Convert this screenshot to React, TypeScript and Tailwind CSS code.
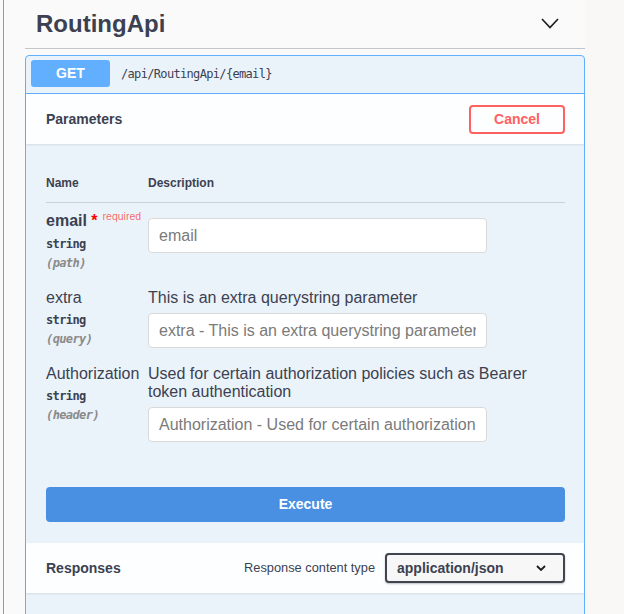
import React from "react";

const mono = "font-['DejaVu_Sans_Mono','Liberation_Mono',monospace]";

function ParamRow({
  name,
  required,
  type,
  inLoc,
  description,
  placeholder,
}: {
  name: string;
  required?: boolean;
  type: string;
  inLoc: string;
  description?: string;
  placeholder: string;
}) {
  return (
    <div className="flex py-[8px]">
      <div className="w-[102px] shrink-0">
        <div
          className={
            "text-[16px] leading-[20px] text-[#3b4151] whitespace-nowrap " +
            (required ? "font-bold" : "font-normal")
          }
        >
          {name}
          {required && (
            <>
              <span className="text-[#ff0000]">&nbsp;*</span>
              <span className="relative -top-[6px] px-[5px] text-[10.5px] font-normal text-[rgba(255,0,0,0.6)]">
                required
              </span>
            </>
          )}
        </div>
        <div className={mono + " mt-[3px] text-[12px] tracking-[-0.6px] leading-[18px] font-bold text-[#3b4151]"}>
          {type}
        </div>
        <div className={mono + " mt-[1px] text-[12px] tracking-[-0.6px] leading-[18px] font-bold italic text-[#8a8a8a]"}>
          ({inLoc})
        </div>
      </div>
      <div className="flex-1 pt-[1px]">
        {description && (
          <div className="text-[16px] leading-[18px] text-[#3b4151]">{description}</div>
        )}
        <input
          readOnly
          placeholder={placeholder}
          className="mt-[6px] block w-[339px] h-[35px] rounded-[4px] border border-[#d9d9d9] bg-white px-[10px] text-[16px] text-[#3b4151] placeholder:text-[#7a7a7a] outline-none font-['Liberation_Sans',Arial,sans-serif]"
        />
      </div>
    </div>
  );
}

export default function App() {
  return (
    <div className="min-h-screen w-full bg-[#fafafa] flex font-['Liberation_Sans',Arial,sans-serif] overflow-hidden">
      <div className="ml-[3px] border-l border-[#89bf04] pl-[21px] w-[582px] shrink-0">
        {/* Header */}
        <div className="h-[49px] border-b border-[#c3c5c9] flex items-center justify-between pl-[11px] pr-[26px]">
          <div className="text-[24px] leading-none font-bold text-[#3b4151]">RoutingApi</div>
          <svg width="18" height="11" viewBox="0 0 18 11" className="-mt-[2px]">
            <path d="M1 1 L9 9.5 L17 1" fill="none" stroke="#1b1b1b" strokeWidth="1.6" />
          </svg>
        </div>

        {/* Opblock */}
        <div className="mt-[6px] border border-[#61affe] rounded-[4px] bg-[#ebf3fa]">
          <div className="h-[38px] border-b border-[#61affe] flex items-start pt-[4px] px-[5px]">
            <div className="w-[79px] h-[27px] rounded-[3px] bg-[#61affe] flex items-center justify-center text-white text-[14px] font-bold">
              GET
            </div>
            <div className={mono + " ml-[11px] h-[27px] flex items-center text-[12px] tracking-[-0.67px] font-normal text-[#3b4151]"}>
              /api/RoutingApi/{"{email}"}
            </div>
          </div>

          <div className="h-[50px] bg-[rgba(255,255,255,0.85)] shadow-[0_1px_2px_rgba(0,0,0,0.1)] flex items-center justify-between pl-[20px] pr-[19px]">
            <div className="text-[14px] font-bold text-[#3b4151]">Parameters</div>
            <div className="w-[96px] h-[29px] rounded-[4px] border-2 border-[#ff6060] flex items-center justify-center text-[14px] font-bold text-[#ff6060]">
              Cancel
            </div>
          </div>

          <div className="pl-[20px] pr-[19px] pt-[20px]">
            <div className="flex border-b border-[#c9d0da] py-[12px] text-[12px] leading-[14px] font-bold text-[#3b4151]">
              <div className="w-[102px]">Name</div>
              <div>Description</div>
            </div>
            <ParamRow name="email" required type="string" inLoc="path" placeholder="email" />
            <ParamRow
              name="extra"
              type="string"
              inLoc="query"
              description="This is an extra querystring parameter"
              placeholder="extra - This is an extra querystring parameter"
            />
            <ParamRow
              name="Authorization"
              type="string"
              inLoc="header"
              description="Used for certain authorization policies such as Bearer token authentication"
              placeholder="Authorization - Used for certain authorization policies such as Bearer token authentication"
            />

            <div className="mt-[37px] h-[35px] rounded-[4px] bg-[#4990e2] flex items-center justify-center text-white text-[14px] font-bold">
              Execute
            </div>
          </div>

          <div className="mt-[21px] h-[50px] bg-[rgba(255,255,255,0.85)] shadow-[0_1px_2px_rgba(0,0,0,0.1)] flex items-center justify-between pl-[20px] pr-[19px]">
            <div className="text-[14px] font-bold text-[#3b4151]">Responses</div>
            <div className="flex items-center">
              <div className="text-[12.8px] text-[#3b4151]">Response content type</div>
              <div className="ml-[10px] w-[180px] h-[30px] rounded-[4px] border-2 border-[#41444e] bg-[#f7f7f7] shadow-[0_1px_2px_rgba(0,0,0,0.25)] flex items-center justify-between pl-[10px] pr-[17px]">
                <span className="text-[14px] font-bold text-[#3b4151]">application/json</span>
                <svg width="10" height="6" viewBox="0 0 10 6">
                  <path d="M1 1 L5 5 L9 1" fill="none" stroke="#1b1b1b" strokeWidth="1.8" />
                </svg>
              </div>
            </div>
          </div>
          <div className="h-[40px]" />
        </div>
      </div>
      <div className="flex-1 bg-[#f9f8f6]" />
    </div>
  );
}
